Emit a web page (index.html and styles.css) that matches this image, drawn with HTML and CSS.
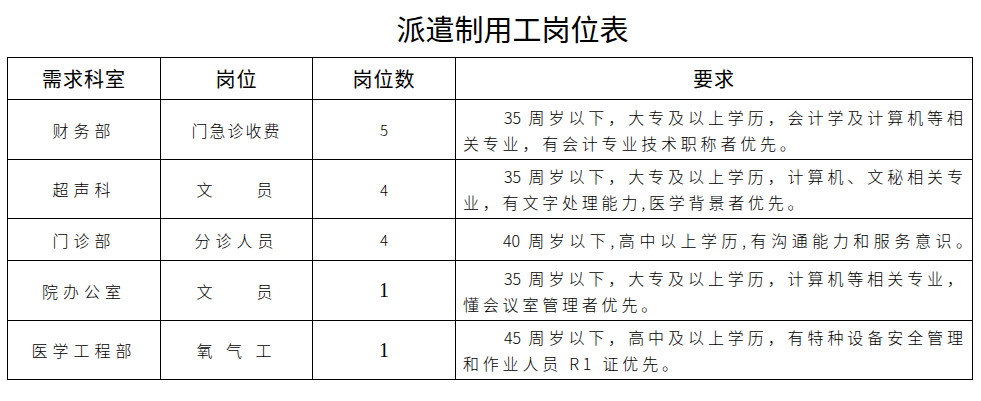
FILE: index.html
```html
<!DOCTYPE html>
<html lang="zh-CN">
<head>
<meta charset="utf-8">
<title>派遣制用工岗位表</title>
<link rel="stylesheet" href="styles.css">
</head>
<body>
<div class="page">
  <h1 class="title">派遣制用工岗位表</h1>
  <table class="jobs">
    <colgroup>
      <col class="c-dept"><col class="c-post"><col class="c-num"><col class="c-req">
    </colgroup>
    <thead>
      <tr class="r-short"><th>需求科室</th><th>岗位</th><th>岗位数</th><th>要求</th></tr>
    </thead>
    <tbody>
      <tr class="r-tall">
        <td class="dept">财务部</td>
        <td class="post tight">门急诊收费</td>
        <td class="num">5</td>
        <td class="req"><span class="l1">35 周岁以下，大专及以上学历，会计学及计算机等相</span><span class="l2">关专业，有会计专业技术职称者优先。</span></td>
      </tr>
      <tr class="r-tall2">
        <td class="dept">超声科</td>
        <td class="post mid">文　　员</td>
        <td class="num">4</td>
        <td class="req"><span class="l1">35 周岁以下，大专及以上学历，计算机、文秘相关专</span><span class="l2">业，有文字处理能力,医学背景者优先。</span></td>
      </tr>
      <tr class="r-short">
        <td class="dept">门诊部</td>
        <td class="post">分诊人员</td>
        <td class="num">4</td>
        <td class="req"><span class="solo">40 周岁以下,高中以上学历,有沟通能力和服务意识。</span></td>
      </tr>
      <tr class="r-tall">
        <td class="dept">院办公室</td>
        <td class="post mid">文　　员</td>
        <td class="num serif">1</td>
        <td class="req"><span class="l1">35 周岁以下，大专及以上学历，计算机等相关专业，</span><span class="l2">懂会议室管理者优先。</span></td>
      </tr>
      <tr class="r-tall2">
        <td class="dept">医学工程部</td>
        <td class="post">氧 气 工</td>
        <td class="num serif">1</td>
        <td class="req"><span class="l1">45 周岁以下，高中及以上学历，有特种设备安全管理</span><span class="l2">和作业人员 R1 证优先。</span></td>
      </tr>
    </tbody>
  </table>
</div>
</body>
</html>
```

FILE: styles.css
```css
html, body {
  margin: 0;
  background: #fff;
  color: #000;
  font-family: "Noto Sans CJK SC", "Noto Sans", sans-serif;
}

.page {
  width: 965px;
  padding: 0 9px 0 7px;
}

.title {
  margin: 0;
  height: 57px;
  display: flex;
  align-items: center;
  justify-content: center;
  padding-left: 46px;
  font-size: 29px;
  font-weight: 400;
  line-height: 1;
  box-sizing: border-box;
}

.jobs {
  width: 965px;
  border-collapse: collapse;
  table-layout: fixed;
}

.c-dept { width: 153px; }
.c-post { width: 152px; }
.c-num  { width: 143px; }
.c-req  { width: 517px; }

.jobs th,
.jobs td {
  border: 1px solid #000;
  padding: 0;
  text-align: center;
  vertical-align: middle;
}

.jobs th {
  font-size: 20px;
  font-weight: 400;
  letter-spacing: 1px;
}

.r-short { height: 42px; }
.r-tall  { height: 60px; }
.r-tall2 { height: 59px; }

.dept,
.post {
  font-size: 16px;
  font-weight: 300;
  letter-spacing: 5px;
  white-space: nowrap;
}

.post.tight { letter-spacing: 2px; }
.post.mid { letter-spacing: 4px; }

.num {
  font-size: 15px;
  font-weight: 300;
}

.num.serif {
  font-family: "Liberation Serif", serif;
  font-size: 20px;
  font-weight: 400;
}

.jobs td.req {
  text-align: left;
  padding: 0 9px 0 7px;
  font-size: 16px;
  font-weight: 300;
  line-height: 26px;
}

.l1 {
  display: block;
  white-space: nowrap;
  text-indent: 41px;
  text-align: justify;
  text-align-last: justify;
}

.l2 {
  display: block;
  white-space: nowrap;
  letter-spacing: 3.8px;
}

.solo {
  display: block;
  white-space: nowrap;
  padding-left: 40px;
  margin-right: -9px;
  text-align: justify;
  text-align-last: justify;
}
```
